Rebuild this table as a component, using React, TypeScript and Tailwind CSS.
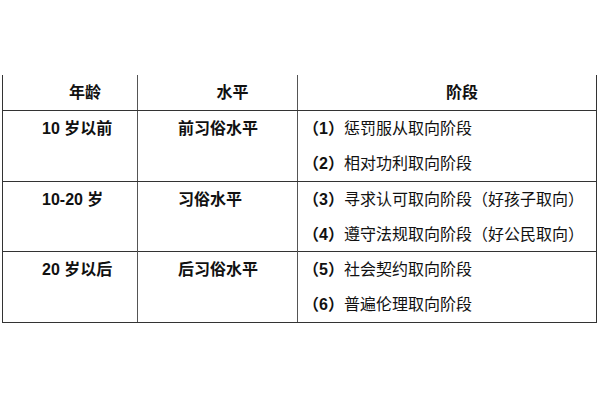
const rows = [
  { age: '10 岁以前', level: '前习俗水平', stages: [['（1）', '惩罚服从取向阶段'], ['（2）', '相对功利取向阶段']], h: 'h-[71px]' },
  { age: '10-20 岁', level: '习俗水平', stages: [['（3）', '寻求认可取向阶段（好孩子取向）'], ['（4）', '遵守法规取向阶段（好公民取向）']], h: 'h-[70px]' },
  { age: '20 岁以后', level: '后习俗水平', stages: [['（5）', '社会契约取向阶段'], ['（6）', '普遍伦理取向阶段']], h: 'h-[71px]' },
];

export default function App() {
  return (
    <div
      className="w-[600px] h-[400px] bg-white pt-[75px] pl-[2px] text-[16px] text-[#111]"
      style={{ fontFamily: '"Liberation Sans", "Noto Sans CJK SC", sans-serif' }}
    >
      <div className="w-[595px] border-l border-r border-[#333]">
        {/* header */}
        <div className="grid grid-cols-[135px_160px_298px] h-[36px] border-b border-[#333] font-bold">
          <div className="border-r border-[#555] flex items-center justify-center pl-[30px]">年龄</div>
          <div className="border-r border-[#555] flex items-center justify-center pl-[30px]">水平</div>
          <div className="flex items-center justify-center pl-[30px]">阶段</div>
        </div>
        {rows.map((r) => (
          <div key={r.age} className={`grid grid-cols-[135px_160px_298px] ${r.h} border-b border-[#333]`}>
            <div className="border-r border-[#555] pl-[39px] leading-[35px] font-bold">{r.age}</div>
            <div className="border-r border-[#555] pl-[40px] leading-[35px] font-bold">{r.level}</div>
            <div className="pl-[5px] leading-[35px]">
              {r.stages.map(([n, t]) => (
                <div key={n} className="whitespace-nowrap">
                  <span className="font-bold">{n}</span>
                  {t}
                </div>
              ))}
            </div>
          </div>
        ))}
      </div>
    </div>
  );
}
